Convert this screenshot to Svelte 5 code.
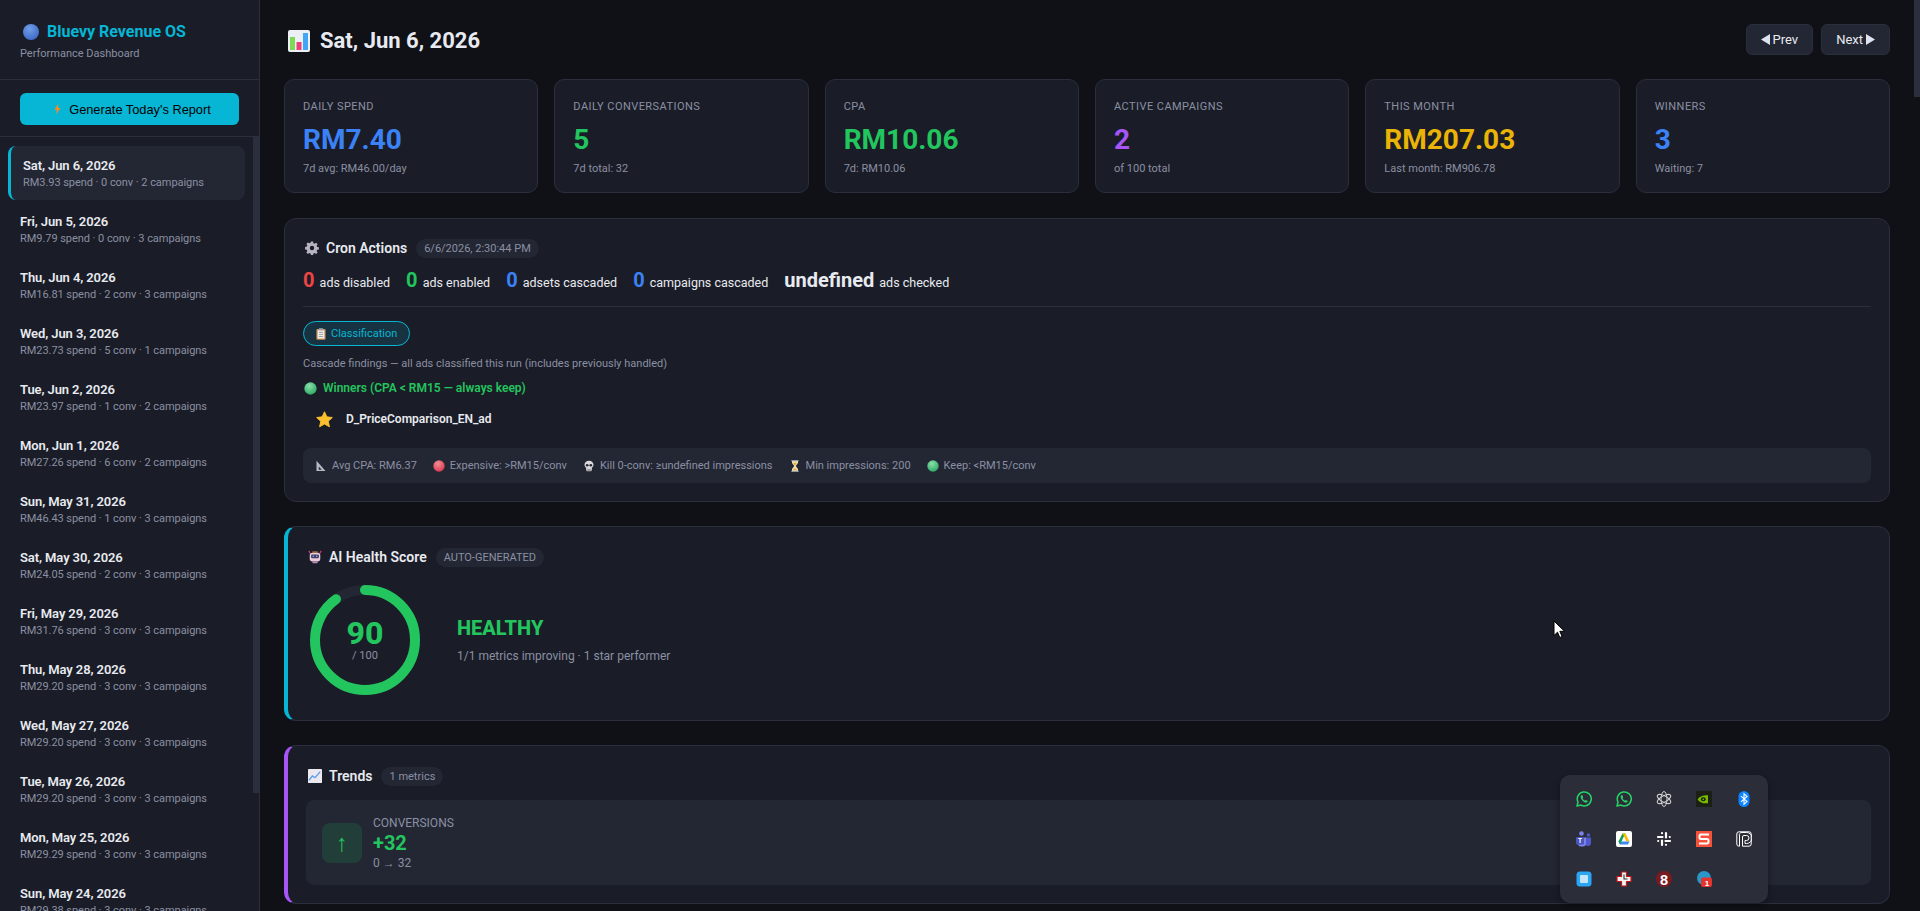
<script>
  const days = [
    { label: 'Sat, Jun 6, 2026', spend: '3.93', conv: 0, camps: 2, active: true },
    { label: 'Fri, Jun 5, 2026', spend: '9.79', conv: 0, camps: 3 },
    { label: 'Thu, Jun 4, 2026', spend: '16.81', conv: 2, camps: 3 },
    { label: 'Wed, Jun 3, 2026', spend: '23.73', conv: 5, camps: 1 },
    { label: 'Tue, Jun 2, 2026', spend: '23.97', conv: 1, camps: 2 },
    { label: 'Mon, Jun 1, 2026', spend: '27.26', conv: 6, camps: 2 },
    { label: 'Sun, May 31, 2026', spend: '46.43', conv: 1, camps: 3 },
    { label: 'Sat, May 30, 2026', spend: '24.05', conv: 2, camps: 3 },
    { label: 'Fri, May 29, 2026', spend: '31.76', conv: 3, camps: 3 },
    { label: 'Thu, May 28, 2026', spend: '29.20', conv: 3, camps: 3 },
    { label: 'Wed, May 27, 2026', spend: '29.20', conv: 3, camps: 3 },
    { label: 'Tue, May 26, 2026', spend: '29.20', conv: 3, camps: 3 },
    { label: 'Mon, May 25, 2026', spend: '29.29', conv: 3, camps: 3 },
    { label: 'Sun, May 24, 2026', spend: '29.38', conv: 3, camps: 3 },
  ]

  const stats = [
    { label: 'Daily Spend', value: 'RM7.40', sub: '7d avg: RM46.00/day', color: 'blue' },
    { label: 'Daily Conversations', value: '5', sub: '7d total: 32', color: 'green' },
    { label: 'CPA', value: 'RM10.06', sub: '7d: RM10.06', color: 'green' },
    { label: 'Active Campaigns', value: '2', sub: 'of 100 total', color: 'purple' },
    { label: 'This Month', value: 'RM207.03', sub: 'Last month: RM906.78', color: 'yellow' },
    { label: 'Winners', value: '3', sub: 'Waiting: 7', color: 'blue' },
  ]

  const cron = [
    { n: '0', text: 'ads disabled', color: 'red' },
    { n: '0', text: 'ads enabled', color: 'green' },
    { n: '0', text: 'adsets cascaded', color: 'blue' },
    { n: '0', text: 'campaigns cascaded', color: 'blue' },
  ]

  const score = 90
  const circ = 2 * Math.PI * 50
</script>

{#snippet ball(c1, c2)}
  <svg class="emo" viewBox="0 0 16 16"><defs><radialGradient id={'b' + c2} cx=".4" cy=".3" r=".8"><stop offset="0" stop-color={c1} /><stop offset="1" stop-color={c2} /></radialGradient></defs><circle cx="8" cy="8" r="7.6" fill={'url(#b' + c2 + ')'} /></svg>
{/snippet}

{#snippet whatsapp()}
  <svg viewBox="0 0 16 16"><path d="M.9 15.100l1.100-4A7 7 0 1 1 4.900 14.100z" fill="none" stroke="#25d366" stroke-width="1.500" stroke-linejoin="round" /><path d="M5.300 4.300c-1 .8-.9 2.300.3 4.100 1.300 1.900 3.100 3.100 4.400 3.100 1 0 1.800-.7 1.800-1.500L9.800 8.900l-.8.800C8 9.300 7 8.300 6.500 7.200l.7-.8-.7-2.100z" fill="#25d366" /></svg>
{/snippet}

<div class="layout">
  <aside class="sidebar">
    <div class="brand">
      <div class="brand-name">
        <svg class="brand-ball" viewBox="0 0 16 16"><defs><radialGradient id="bb" cx=".4" cy=".3" r=".8"><stop offset="0" stop-color="#6f9fe8" /><stop offset="1" stop-color="#3a63c4" /></radialGradient></defs><circle cx="8" cy="8" r="8" fill="url(#bb)" /></svg>
        Bluevy Revenue OS
      </div>
      <div class="brand-sub">Performance Dashboard</div>
    </div>
    <div class="gen-wrap">
      <button class="gen">
        <svg viewBox="0 0 8 12" width="7" height="12"><path d="M5 0L.5 6.800h2.700L2.400 12 7.500 4.800H4.500z" fill="#ff8a1f" /></svg>
        Generate Today's Report
      </button>
    </div>
    <div class="days">
      {#each days as d}
        <div class="day" class:active={d.active}>
          <div class="day-title">{d.label}</div>
          <div class="day-sub">RM{d.spend} spend · {d.conv} conv · {d.camps} campaigns</div>
        </div>
      {/each}
    </div>
  </aside>

  <main class="main">
    <header class="top">
      <h1>
        <svg class="h1-icon" viewBox="0 0 22 22"><rect width="22" height="22" rx="2" fill="#eceff3" /><rect x="2" y="7" width="5" height="13" fill="#7ed957" /><rect x="8.500" y="12" width="5" height="8" fill="#ec407a" /><rect x="15" y="3" width="5" height="17" fill="#42a5f5" /></svg>
        Sat, Jun 6, 2026
      </h1>
      <div class="nav">
        <button class="nav-btn"><svg viewBox="0 0 10 12" width="9" height="11"><path d="M10 0v12L0 6z" fill="#dfe3f0" /></svg> Prev</button>
        <button class="nav-btn">Next <svg viewBox="0 0 10 12" width="9" height="11"><path d="M0 0v12l10-6z" fill="#dfe3f0" /></svg></button>
      </div>
    </header>

    <section class="stats">
      {#each stats as s}
        <div class="stat">
          <div class="stat-label">{s.label}</div>
          <div class="stat-value {s.color}">{s.value}</div>
          <div class="stat-sub">{s.sub}</div>
        </div>
      {/each}
    </section>

    <section class="card cron">
      <div class="card-title">
        <svg class="emo" viewBox="0 0 16 16"><path fill="#b9b4c4" fill-rule="evenodd" d="M6.800.5h2.400l.4 2 1.300.6 1.800-1.100 1.700 1.700-1.100 1.800.6 1.300 2 .4v2.400l-2 .4-.6 1.300 1.100 1.800-1.700 1.700-1.800-1.100-1.300.6-.4 2H6.800l-.4-2-1.300-.6-1.800 1.100-1.700-1.700 1.100-1.800-.6-1.300-2-.4V6.800l2-.4.6-1.300L1.600 3.300l1.700-1.700 1.800 1.100 1.300-.6zM8 5.500a2.500 2.500 0 1 0 0 5 2.500 2.500 0 0 0 0-5z" /></svg>
        Cron Actions
        <span class="chip">6/6/2026, 2:30:44 PM</span>
      </div>
      <div class="cron-row">
        {#each cron as c}
          <span class="cron-item"><b class={c.color}>{c.n}</b> {c.text}</span>
        {/each}
        <span class="cron-item"><b class="white">undefined</b> ads checked</span>
      </div>
      <div class="divider"></div>
      <span class="tab">
        <svg viewBox="0 0 12 14" width="10" height="12"><rect x=".5" y="1" width="11" height="13" rx="1" fill="#c98d5a" /><rect x="2" y="2.500" width="8" height="10" fill="#f1efe9" /><rect x="3.500" y="0" width="5" height="2.500" fill="#9aa0a6" /><path d="M3.500 5h5M3.500 7.500h5M3.500 10h5" stroke="#8a8f99" /></svg>
        Classification
      </span>
      <div class="note">Cascade findings — all ads classified this run (includes previously handled)</div>
      <div class="winners">{@render ball('#8ce0a8', '#22a45e')} Winners (CPA &lt; RM15 — always keep)</div>
      <div class="ad-row">
        <svg class="star" viewBox="0 0 18 18"><path d="M9 .8l2.500 5.400 5.800.7-4.300 4 1.200 5.800L9 13.800l-5.200 2.900L5 10.900l-4.300-4 5.800-.7z" fill="#fbc02d" stroke="#fbc02d" stroke-linejoin="round" /></svg>
        <span>D_PriceComparison_EN_ad</span>
      </div>
      <div class="legend">
        <span>
          <svg class="emo" viewBox="0 0 16 16"><path d="M2 1l12 13.500H2z" fill="#b5bac4" /><path d="M5 8.500l4 4.500H5z" fill="#232733" /></svg>
          Avg CPA: RM6.37
        </span>
        <span>{@render ball('#f28b94', '#d8324a')} Expensive: &gt;RM15/conv</span>
        <span>
          <svg class="emo" viewBox="0 0 16 16"><path d="M8 1c3.700 0 6 2.300 6 5.300 0 2-1 3.300-2.200 4V13c0 1.100-.7 2-2 2H6.200c-1.300 0-2-.9-2-2v-2.700C3 9.600 2 8.300 2 6.300 2 3.300 4.300 1 8 1z" fill="#d9d9de" /><circle cx="5.600" cy="7" r="1.800" fill="#2a2730" /><circle cx="10.400" cy="7" r="1.800" fill="#2a2730" /><path d="M6.500 12v3M8 12v3M9.500 12v3" stroke="#2a2730" stroke-width=".6" /></svg>
          Kill 0-conv: ≥undefined impressions
        </span>
        <span>
          <svg class="emo" viewBox="0 0 16 16"><path d="M4 1h8v3L9 8l3 4v3H4v-3l3-4-3-4z" fill="#f1e3b4" /><path d="M5.500 3.500h5L8 7.500zM5 13.500L8 10.500l3 3z" fill="#e6a93c" /><path d="M3 1h10M3 15h10" stroke="#aab0ba" stroke-width="1.500" /></svg>
          Min impressions: 200
        </span>
        <span>{@render ball('#8ce0a8', '#22a45e')} Keep: &lt;RM15/conv</span>
      </div>
    </section>

    <section class="card accent cyan-edge">
      <div class="card-title">
        <svg class="emo" viewBox="0 0 16 16"><path d="M1 1l1.500 3M15 1l-1.500 3" stroke="#e0367a" stroke-width="1.300" /><rect x="2" y="3" width="12" height="10" rx="3" fill="#eec9dc" /><rect x="3.500" y="5" width="9" height="4.500" rx="1.500" fill="#3a3f66" /><circle cx="6" cy="7.200" r=".9" fill="#9fb7f0" /><circle cx="10" cy="7.200" r=".9" fill="#9fb7f0" /><rect x="5" y="13" width="6" height="2" rx=".8" fill="#b58dc0" /><path d="M5 2.800h6v-1H5z" fill="#e8b04a" /></svg>
        AI Health Score
        <span class="chip">AUTO-GENERATED</span>
      </div>
      <div class="health">
        <div class="ring">
          <svg viewBox="0 0 110 110" width="110" height="110">
            <circle cx="55" cy="55" r="50" fill="none" stroke="#232733" stroke-width="10" />
            <circle cx="55" cy="55" r="50" fill="none" stroke="#22c55e" stroke-width="10" stroke-linecap="round" stroke-dasharray="{circ * score / 100} {circ}" transform="rotate(-90 55 55)" />
          </svg>
          <div class="ring-text">
            <div class="ring-num">{score}</div>
            <div class="ring-of">/ 100</div>
          </div>
        </div>
        <div>
          <div class="health-label">HEALTHY</div>
          <div class="health-sub">1/1 metrics improving · 1 star performer</div>
        </div>
      </div>
    </section>

    <section class="card accent purple-edge">
      <div class="card-title">
        <svg class="emo" viewBox="0 0 16 16"><rect width="16" height="16" rx="1" fill="#ece8f0" /><path d="M1 13l4-5 3 2 6-7" fill="none" stroke="#5b9be8" stroke-width="1.500" /></svg>
        Trends
        <span class="chip">1 metrics</span>
      </div>
      <div class="trend">
        <div class="trend-arrow">↑</div>
        <div>
          <div class="trend-label">CONVERSIONS</div>
          <div class="trend-value">+32</div>
          <div class="trend-sub">0 → 32</div>
        </div>
      </div>
    </section>
  </main>

  <div class="thumb thumb-side"></div>
  <div class="thumb thumb-main"></div>

  <div class="tray">
    {@render whatsapp()}
    {@render whatsapp()}
    <svg viewBox="0 0 16 16"><g fill="none" stroke="#cfcfcf" stroke-width="1"><ellipse cx="8" cy="8" rx="3" ry="7.500" /><ellipse cx="8" cy="8" rx="3" ry="7.500" transform="rotate(60 8 8)" /><ellipse cx="8" cy="8" rx="3" ry="7.500" transform="rotate(120 8 8)" /></g></svg>
    <svg viewBox="0 0 16 16"><rect width="16" height="16" fill="#1b1f14" /><path d="M1.500 8.500C4 5 8 3.800 12 4.300v7.900C8 12.800 4 11.800 1.500 8.500z" fill="#76b900" /><ellipse cx="7.300" cy="8.300" rx="2.400" ry="2" fill="#1b1f14" /><circle cx="7.300" cy="8.300" r=".9" fill="#76b900" /></svg>
    <svg viewBox="0 0 16 16"><rect x="2.500" width="11" height="16" rx="5.500" fill="#0a84ff" /><path d="M5 5.200l6 5.400L8 13.200V2.800l3 2.600-6 5.400" fill="none" stroke="#fff" stroke-width="1.100" /></svg>
    <svg viewBox="0 0 16 16"><circle cx="5.500" cy="2.500" r="2.300" fill="#7b83eb" /><circle cx="12.500" cy="4" r="1.800" fill="#5059c9" /><path d="M9 6.500h6v5.500a3 3 0 0 1-6 0z" fill="#5059c9" /><path d="M2 6.500h8v6a3 3 0 0 1-3 3H5a3 3 0 0 1-3-3z" fill="#7b83eb" /><rect y="6" width="8" height="7.500" rx="1" fill="#4b53bc" /><text x="4" y="12" class="t" font-size="6.500">T</text></svg>
    <svg viewBox="0 0 16 16"><rect width="16" height="16" rx="2" fill="#fff" /><path d="M6.500 2.500h3l-3 5.500L5 10.800 2.500 10.500z" fill="#0f9d58" /><path d="M6.500 2.500h3l4 8h-3z" fill="#fbbc04" /><path d="M2.500 10.500h11l-1.500 3H4z" fill="#4285f4" /><path d="M2.500 10.500l4-2.500-2.500 5.500z" fill="#0f9d58" /></svg>
    <svg viewBox="0 0 16 16"><g fill="none" stroke="#fff" stroke-width="2.200" stroke-linecap="round"><path d="M2 6h4.500M10 2v4.500M14 10H9.500M6 14V9.500" /><path d="M6 2.200v.01M13.800 6h.01M10 13.800v.01M2.200 10h.01" /></g></svg>
    <svg viewBox="0 0 16 16"><rect width="16" height="16" fill="#f4523b" /><path d="M13 3.500H5a1.500 1.500 0 0 0-1.500 1.500v1.500A1.500 1.500 0 0 0 5 8h6a1.500 1.500 0 0 1 1.500 1.500V11A1.500 1.500 0 0 1 11 12.500H3" fill="none" stroke="#fff" stroke-width="2" /></svg>
    <svg viewBox="0 0 16 16" fill="none" stroke="#fff" stroke-width="1"><path d="M3 .8h10A2.200 2.200 0 0 1 15.200 3v10a2.200 2.200 0 0 1-2.200 2.200H6.500V6a1.500 1.500 0 0 1 1.500-1.500h2.500a2.500 2.500 0 0 1 0 5H9v3h1.500a5.500 5.500 0 0 0 0-11H6A2.500 2.500 0 0 0 3.500 5v10.200H3A2.200 2.200 0 0 1 .8 13V3A2.200 2.200 0 0 1 3 .8z" /></svg>
    <svg viewBox="0 0 16 16"><rect x=".5" y=".5" width="15" height="15" rx="3.500" fill="#2aa6f5" /><rect x="4" y="4" width="8" height="8" rx="1" fill="#c4e6fb" /></svg>
    <svg viewBox="0 0 16 16"><path d="M5.500 1h5v4.500H15v5h-4.500V15h-5v-4.500H1v-5h4.500z" fill="#f2f2f2" stroke="#c4161c" stroke-width="1.200" /><path d="M8 3.500V8h3.500" fill="none" stroke="#333" stroke-width="1.100" /></svg>
    <svg viewBox="0 0 16 16"><circle cx="8" cy="8" r="8" fill="#7a1a20" /><text x="8" y="13.500" class="t" font-size="14.500">8</text></svg>
    <svg viewBox="0 0 16 16"><circle cx="8" cy="7" r="7" fill="#2a97c9" /><rect x="5" y="6.500" width="11" height="9.500" rx="2" fill="#e5332f" /><text x="11" y="14.500" class="t" font-size="8">1</text></svg>
  </div>

  <svg class="cursor" viewBox="0 0 12 19" width="12" height="19"><path d="M1 1v14.500l3.500-3.300 2.300 5.300 2.300-1-2.300-5.200H11.500z" fill="#fff" stroke="#000" stroke-width="1" /></svg>
</div>

<style>
  :global(body) {
    margin: 0;
    background: #0f1117;
    color: #e8eaf0;
    font-family: Roboto, 'Noto Sans', sans-serif;
  }

  .layout {
    display: flex;
    height: 100vh;
    overflow: hidden;
    position: relative;
  }

  .sidebar {
    width: 260px;
    flex-shrink: 0;
    box-sizing: border-box;
    background: #1a1d27;
    border-right: 1px solid #2a2e3d;
    display: flex;
    flex-direction: column;
  }

  .brand {
    height: 80px;
    box-sizing: border-box;
    padding: 22px 20px 0;
    border-bottom: 1px solid #2a2e3d;
  }

  .brand-name {
    display: flex;
    align-items: center;
    gap: 8px;
    margin-left: 3px;
    font-size: 16px;
    line-height: 20px;
    font-weight: 700;
    color: #06b6d4;
  }

  .brand-ball {
    width: 16px;
    height: 16px;
  }

  .brand-sub {
    margin-top: 3px;
    font-size: 11px;
    line-height: 18px;
    color: #8b8fa3;
  }

  .gen-wrap {
    height: 57px;
    box-sizing: border-box;
    padding: 13px 20px 0;
    border-bottom: 1px solid #2a2e3d;
  }

  .gen {
    width: 100%;
    height: 32px;
    padding: 0 0 0 6px;
    border: none;
    border-radius: 6px;
    background: #06b6d4;
    color: #000;
    font-family: 'Liberation Sans', sans-serif;
    font-size: 12.8px;
    display: flex;
    align-items: center;
    justify-content: center;
    gap: 8px;
    cursor: pointer;
  }

  .days {
    flex: 1;
    overflow: hidden;
    padding: 9px 14px 8px 8px;
  }

  .thumb {
    position: absolute;
    width: 6px;
    background: #2a2e3d;
  }

  .thumb-side {
    left: 253px;
    top: 137px;
    height: 656px;
  }

  .thumb-main {
    right: 0;
    top: 0;
    height: 97px;
  }

  .day {
    height: 54px;
    box-sizing: border-box;
    margin-bottom: 2px;
    padding: 11px 12px 0;
    border-radius: 8px;
    cursor: pointer;
  }

  .day.active {
    background: #232733;
    border-left: 3px solid #06b6d4;
  }

  .day-title {
    font-size: 13px;
    line-height: 18px;
    letter-spacing: -0.1px;
    font-weight: 600;
    color: #e8eaf0;
  }

  .day-sub {
    font-size: 11px;
    line-height: 16px;
    letter-spacing: -0.05px;
    color: #8b8fa3;
  }

  .main {
    flex: 1;
    min-width: 0;
    overflow: hidden;
    padding: 24px 30px 24px 24px;
  }

  .top {
    display: flex;
    justify-content: space-between;
    align-items: center;
    height: 31px;
    margin-bottom: 24px;
  }

  h1 {
    margin: 2px 0 0;
    display: flex;
    align-items: center;
    gap: 10px;
    font-size: 22px;
    font-weight: 700;
    color: #e8eaf0;
  }

  .h1-icon {
    width: 22px;
    height: 22px;
    margin-left: 4px;
  }

  .nav {
    display: flex;
    gap: 8px;
  }

  .nav-btn {
    height: 31px;
    padding: 0 14px;
    border: 1px solid #2a2e3d;
    border-radius: 6px;
    background: #232733;
    color: #e8eaf0;
    font-family: inherit;
    font-size: 13px;
    display: flex;
    align-items: center;
    gap: 3px;
    cursor: pointer;
  }

  .stats {
    display: grid;
    grid-template-columns: repeat(6, 1fr);
    gap: 16px;
    margin-bottom: 25px;
  }

  .stat {
    height: 114px;
    box-sizing: border-box;
    padding: 19px 18px 0;
    background: #1a1d27;
    border: 1px solid #2a2e3d;
    border-radius: 10px;
  }

  .stat-label {
    font-size: 11px;
    line-height: 16px;
    letter-spacing: 0.45px;
    text-transform: uppercase;
    color: #8b8fa3;
  }

  .stat-value {
    margin-top: 7px;
    font-size: 28px;
    line-height: 36px;
    font-weight: 700;
  }

  .stat-sub {
    margin-top: 3px;
    font-size: 11px;
    line-height: 16px;
    color: #8b8fa3;
  }

  .blue { color: #3b82f6; }
  .green { color: #22c55e; }
  .purple { color: #a855f7; }
  .yellow { color: #eab308; }
  .red { color: #ef4444; }
  .white { color: #e8eaf0; }

  .card {
    box-sizing: border-box;
    margin-bottom: 24px;
    padding: 19px 18px 18px;
    background: #1a1d27;
    border: 1px solid #2a2e3d;
    border-radius: 12px;
  }

  .accent {
    border-left-width: 4px;
    padding-top: 20px;
  }

  .cyan-edge {
    border-left-color: #06b6d4;
    height: 195px;
  }

  .purple-edge {
    border-left-color: #a855f7;
    height: 159px;
  }

  .card-title {
    display: flex;
    align-items: center;
    gap: 7px;
    height: 20px;
    font-size: 14px;
    font-weight: 600;
    color: #e8eaf0;
  }

  .emo {
    width: 12px;
    height: 12px;
    flex-shrink: 0;
    vertical-align: -2px;
  }

  .card-title .emo {
    width: 14px;
    height: 14px;
    margin-left: 2px;
  }

  .chip {
    margin-left: 2px;
    padding: 2px 8px;
    border-radius: 10px;
    background: #232733;
    font-size: 11px;
    line-height: 15px;
    font-weight: 400;
    color: #8b8fa3;
  }

  .cron {
    height: 284px;
  }

  .cron-row {
    display: flex;
    gap: 16px;
    align-items: baseline;
    margin-top: 10px;
    height: 24px;
    font-size: 12.5px;
    color: #e8eaf0;
  }

  .cron-item b {
    font-size: 20px;
    font-weight: 700;
    margin-right: 2px;
  }

  .divider {
    height: 1px;
    margin: 14px 0;
    background: #2a2e3d;
  }

  .tab {
    display: inline-flex;
    align-items: center;
    gap: 5px;
    height: 25px;
    box-sizing: border-box;
    padding: 0 12px;
    border: 1px solid #06b6d4;
    border-radius: 14px;
    background: rgba(6, 182, 212, 0.15);
    font-size: 11px;
    color: #06b6d4;
  }

  .note {
    margin-top: 10px;
    font-size: 11px;
    line-height: 16px;
    color: #8b8fa3;
  }

  .winners {
    margin-top: 8px;
    display: flex;
    align-items: center;
    gap: 6px;
    font-size: 12px;
    line-height: 16px;
    font-weight: 600;
    color: #22c55e;
  }

  .winners .emo {
    width: 13px;
    height: 13px;
    margin-left: 1px;
  }

  .ad-row {
    display: flex;
    align-items: center;
    gap: 13px;
    margin-top: 13px;
    padding-left: 13px;
    height: 20px;
    font-size: 12px;
    font-weight: 600;
    color: #e8eaf0;
  }

  .star {
    width: 17px;
    height: 17px;
  }

  .legend {
    display: flex;
    align-items: center;
    gap: 16px;
    margin-top: 19px;
    height: 35px;
    padding: 0 12px;
    border-radius: 8px;
    background: #232733;
    font-size: 11px;
    color: #8b8fa3;
  }

  .legend span {
    display: inline-flex;
    align-items: center;
    gap: 5px;
  }

  .health {
    display: flex;
    align-items: center;
    gap: 37px;
    margin-top: 18px;
    padding-left: 4px;
  }

  .ring {
    position: relative;
    width: 110px;
    height: 110px;
  }

  .ring-text {
    position: absolute;
    inset: 0;
    display: flex;
    flex-direction: column;
    align-items: center;
    justify-content: center;
  }

  .ring-num {
    font-size: 32px;
    line-height: 32px;
    font-weight: 800;
    color: #22c55e;
  }

  .ring-of {
    font-size: 11px;
    line-height: 14px;
    color: #8b8fa3;
  }

  .health-label {
    font-size: 20px;
    line-height: 26px;
    font-weight: 800;
    color: #22c55e;
  }

  .health-sub {
    margin-top: 6px;
    font-size: 12px;
    line-height: 18px;
    color: #8b8fa3;
  }

  .trend {
    display: flex;
    align-items: center;
    gap: 11px;
    margin-top: 14px;
    height: 85px;
    box-sizing: border-box;
    padding: 0 16px;
    border-radius: 8px;
    background: #232733;
  }

  .trend-arrow {
    width: 40px;
    height: 40px;
    display: flex;
    align-items: center;
    justify-content: center;
    border-radius: 8px;
    background: rgba(34, 197, 94, 0.15);
    font-size: 24px;
    color: #22c55e;
  }

  .trend-label {
    font-size: 12px;
    line-height: 16px;
    color: #8b8fa3;
  }

  .trend-value {
    font-size: 20px;
    line-height: 24px;
    font-weight: 700;
    color: #22c55e;
  }

  .trend-sub {
    font-size: 12px;
    line-height: 16px;
    color: #8b8fa3;
  }

  .tray {
    position: absolute;
    left: 1560px;
    top: 775px;
    width: 208px;
    height: 128px;
    box-sizing: border-box;
    padding: 16px;
    display: grid;
    grid-template-columns: repeat(5, 16px);
    grid-auto-rows: 16px;
    justify-content: space-between;
    align-content: space-between;
    background: #2b2d38;
    border-radius: 10px;
    box-shadow: 0 2px 6px rgba(0, 0, 0, 0.4);
  }

  .tray svg {
    width: 16px;
    height: 16px;
  }

  .t {
    fill: #fff;
    font-family: 'Liberation Sans', sans-serif;
    font-weight: 700;
    text-anchor: middle;
  }

  .cursor {
    position: absolute;
    left: 1553px;
    top: 620px;
  }
</style>
